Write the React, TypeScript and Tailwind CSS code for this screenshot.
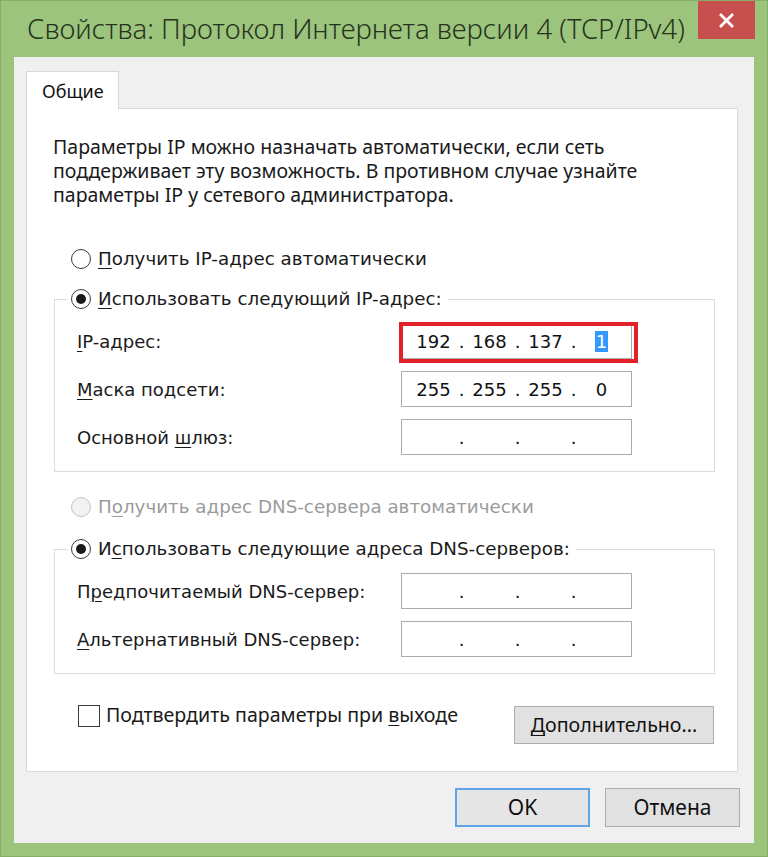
import React from 'react';

const SEGOE = "font-['Noto_Sans',sans-serif]";
const TAHOMA = "font-['DejaVu_Sans',sans-serif]";

const Radio: React.FC<{ checked?: boolean; disabled?: boolean }> = ({ checked, disabled }) => (
  <span
    className={
      disabled
        ? 'w-[20px] h-[20px] rounded-full border border-[#c4c4c4] bg-[#f2f2f2] flex items-center justify-center shrink-0'
        : 'w-[20px] h-[20px] rounded-full border border-[#3a3a3a] bg-white flex items-center justify-center shrink-0'
    }
  >
    {checked && <span className="w-[10px] h-[10px] rounded-full bg-[#1a1a1a]" />}
  </span>
);

// IP address control: four centered octets separated by dots
const IpBox: React.FC<{ octets: string[]; selectLast?: boolean; marked?: boolean }> = ({
  octets,
  selectLast,
  marked,
}) => (
  <div className="relative w-[231px] h-[36px] shrink-0">
    <div className={`w-full h-full border border-[#ababab] bg-white flex items-center pl-[8px] text-[18px] text-[#111] ${TAHOMA}`}>
      {octets.map((o, i) => (
        <React.Fragment key={i}>
          <span className="w-[47px] text-center">
            {selectLast && i === 3 ? <span className="bg-[#3399ff] text-white px-[1px]">{o}</span> : o}
          </span>
          {i < 3 && <span className="w-[9px] text-center">.</span>}
        </React.Fragment>
      ))}
    </div>
    {marked && (
      <div className="absolute -left-[2px] -top-[1px] -right-[6px] -bottom-[4px] border-4 border-[#e3212b]" />
    )}
  </div>
);

const Row: React.FC<{ label: React.ReactNode; children: React.ReactNode }> = ({ label, children }) => (
  <div className="flex items-center h-[36px] pl-[22px]">
    <span className={`w-[324px] text-[18px] text-[#1a1a1a] ${TAHOMA}`}>{label}</span>
    {children}
  </div>
);

const u = 'underline underline-offset-[3px] decoration-1';

const App: React.FC = () => {
  return (
    <div className="w-[768px] h-[857px] bg-[#9cc47c] border border-[#86ae66] flex flex-col overflow-hidden">
      {/* title bar */}
      <div className="h-[56px] flex items-start shrink-0">
        <div className={`pl-[26px] pt-[9px] text-[27.5px] leading-[38px] font-light text-[#26331f] whitespace-nowrap ${SEGOE}`}>
          Свойства: Протокол Интернета версии 4 (TCP/IPv4)
        </div>
        <div className="ml-auto mr-[12px] w-[57px] h-[38px] bg-[#c7504f] flex items-center justify-center shrink-0">
          <svg width="15" height="15" viewBox="0 0 15 15">
            <path d="M2 2 L13 13 M13 2 L2 13" stroke="white" strokeWidth="2.8" strokeLinecap="square" />
          </svg>
        </div>
      </div>

      {/* client area */}
      <div className="mx-[13px] h-[786px] bg-[#f0f0f0] pl-[12px] pr-[16px] pt-[14px] flex flex-col shrink-0">
        <div className={`relative z-10 -mb-px w-[93px] h-[38px] border border-b-0 border-[#d9d9d9] bg-white pl-[15px] pt-[6px] text-[18px] text-[#111] ${SEGOE}`}>
          Общие
        </div>

        <div className="h-[664px] border border-[#d9d9d9] bg-white flex flex-col">
          <p className={`mt-[26px] pl-[26px] text-[19.5px] leading-[24px] text-[#1a1a1a] whitespace-nowrap ${SEGOE}`}>
            Параметры IP можно назначать автоматически, если сеть
            <br />
            поддерживает эту возможность. В противном случае узнайте
            <br />
            параметры IP у сетевого администратора.
          </p>

          <div className="mt-[41px] ml-[44px] h-[22px] flex items-center gap-[7px]">
            <Radio />
            <span className={`text-[18.3px] text-[#1a1a1a] ${TAHOMA}`}>
              <span className={u}>П</span>олучить IP-адрес автоматически
            </span>
          </div>

          <fieldset className="mt-[18px] ml-[27px] mr-[22px] border border-[#dcdcdc]">
            <legend className="ml-[13px] px-[3px] pr-[6px] h-[22px]">
              <span className="flex items-center gap-[7px] h-[22px]">
                <Radio checked />
                <span className={`text-[18.3px] text-[#1a1a1a] ${TAHOMA}`}>
                  <span className={u}>И</span>спользовать следующий IP-адрес:
                </span>
              </span>
            </legend>
            <div className="pt-[13px] pb-[16px] flex flex-col gap-[12px]">
              <Row label={<><span className={u}>I</span>P-адрес:</>}>
                <IpBox octets={['192', '168', '137', '1']} selectLast marked />
              </Row>
              <Row label={<><span className={u}>М</span>аска подсети:</>}>
                <IpBox octets={['255', '255', '255', '0']} />
              </Row>
              <Row label={<>Основной <span className={u}>ш</span>люз:</>}>
                <IpBox octets={['', '', '', '']} />
              </Row>
            </div>
          </fieldset>

          <div className="mt-[24px] ml-[44px] h-[22px] flex items-center gap-[7px]">
            <Radio disabled />
            <span className={`text-[18.3px] text-[#9b9b9b] ${TAHOMA}`}>
              П<span className={u}>о</span>лучить адрес DNS-сервера автоматически
            </span>
          </div>

          <fieldset className="mt-[20px] ml-[27px] mr-[22px] border border-[#dcdcdc]">
            <legend className="ml-[13px] px-[3px] pr-[6px] h-[22px]">
              <span className="flex items-center gap-[7px] h-[22px]">
                <Radio checked />
                <span className={`text-[18.3px] text-[#1a1a1a] ${TAHOMA}`}>
                  И<span className={u}>с</span>пользовать следующие адреса DNS-серверов:
                </span>
              </span>
            </legend>
            <div className="pt-[13px] pb-[16px] flex flex-col gap-[12px]">
              <Row label={<>П<span className={u}>р</span>едпочитаемый DNS-сервер:</>}>
                <IpBox octets={['', '', '', '']} />
              </Row>
              <Row label={<><span className={u}>А</span>льтернативный DNS-сервер:</>}>
                <IpBox octets={['', '', '', '']} />
              </Row>
            </div>
          </fieldset>

          <div className="mt-[31px] flex items-start pl-[51px] pr-[23px]">
            <span className="w-[22px] h-[22px] border border-[#3a3a3a] bg-white shrink-0" />
            <span className={`ml-[6px] text-[19.6px] leading-[24px] -mt-[2px] text-[#1a1a1a] ${SEGOE}`}>
              Подтвердить параметры при <span className={u}>в</span>ыходе
            </span>
            <button className={`ml-auto mt-[1px] w-[200px] h-[38px] bg-[#e1e1e1] border border-[#adadad] text-[19.6px] text-[#111] ${SEGOE}`}>
              <span className={u}>Д</span>ополнительно...
            </button>
          </div>
        </div>

        <div className="mt-[16px] mr-[-2px] flex justify-end gap-[15px]">
          <button className={`w-[135px] h-[39px] bg-[#e5e5e5] border-2 border-[#5ea4e6] text-[21px] text-[#111] ${SEGOE}`}>
            OK
          </button>
          <button className={`w-[135px] h-[39px] bg-[#e1e1e1] border border-[#adadad] text-[21px] text-[#111] ${SEGOE}`}>
            Отмена
          </button>
        </div>
      </div>
    </div>
  );
};

export default App;
